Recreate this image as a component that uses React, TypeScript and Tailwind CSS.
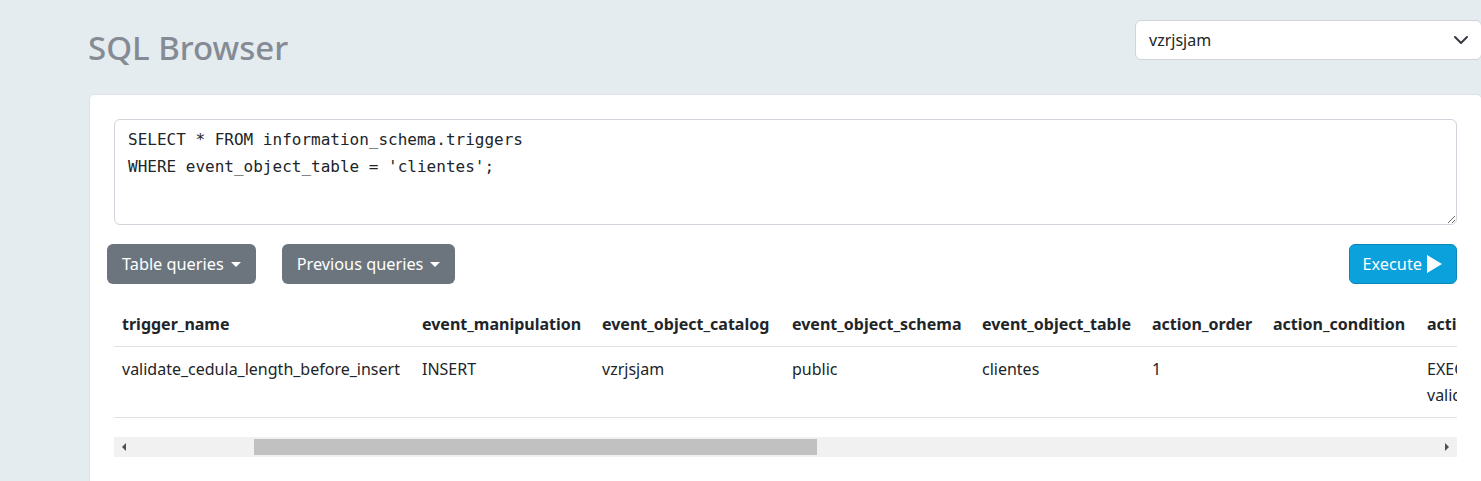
import { useState } from "react";

const columns = [
  { name: "trigger_name", width: "w-[300px]" },
  { name: "event_manipulation", width: "w-[180px]" },
  { name: "event_object_catalog", width: "w-[190px]" },
  { name: "event_object_schema", width: "w-[190px]" },
  { name: "event_object_table", width: "w-[170px]" },
  { name: "action_order", width: "w-[121px]" },
  { name: "action_condition", width: "w-[154px]" },
  { name: "action_statement", width: "w-[200px]" },
  { name: "action_orientation", width: "w-[170px]" },
  { name: "action_timing", width: "w-[140px]" },
  { name: "action_reference_old_table", width: "w-[240px]" },
  { name: "action_reference_new_table", width: "w-[240px]" },
  { name: "created", width: "w-[120px]" },
];

const rows = [
  [
    "validate_cedula_length_before_insert",
    "INSERT",
    "vzrjsjam",
    "public",
    "clientes",
    "1",
    "",
    "EXECUTE FUNCTION validate_cedula_length()",
    "ROW",
    "BEFORE",
    "",
    "",
    "",
  ],
];

function Caret() {
  return (
    <span className="ml-[7px] inline-block h-0 w-0 border-x-[5px] border-t-[5px] border-x-transparent border-t-white align-middle" />
  );
}

function ScrollBar() {
  return (
    <div className="mt-[19px] flex h-[20px] items-center bg-[#f1f1f1]">
      <div className="flex w-[20px] items-center justify-center">
        <span className="h-0 w-0 border-y-[4px] border-r-[4px] border-y-transparent border-r-[#505050]" />
      </div>
      <div className="w-[120px]" />
      <div className="h-[16px] w-[563px] bg-[#c1c1c1]" />
      <div className="flex-1" />
      <div className="flex w-[20px] items-center justify-center">
        <span className="h-0 w-0 border-y-[4px] border-l-[4px] border-y-transparent border-l-[#505050]" />
      </div>
    </div>
  );
}

export default function App() {
  const [query, setQuery] = useState(
    "SELECT * FROM information_schema.triggers\nWHERE event_object_table = 'clientes';",
  );

  return (
    <div className="min-h-screen w-full overflow-hidden bg-[#e5ecf0] font-['Noto_Sans',sans-serif] text-[#212529]">
      <div className="ml-[89px] w-[1393px]">
        <header className="flex h-[94px] items-start justify-between">
          <h1 className="mt-[28px] -ml-[1px] text-[33px] leading-[40px] font-medium text-[#858b94]">SQL Browser</h1>
          <div className="mt-[20px] flex h-[40px] w-[347px] items-center justify-between rounded-[6px] border border-[#ced4da] bg-white pr-[12px] pl-[13px] text-[16px]">
            <span>vzrjsjam</span>
            <svg width="16" height="16" viewBox="0 0 16 16" fill="none">
              <path d="M2 5l6 6 6-6" stroke="#343a40" strokeWidth="2" strokeLinecap="round" strokeLinejoin="round" />
            </svg>
          </div>
        </header>

        <section className="rounded-[5px] border border-[#dde2e7] bg-white px-[24px] pt-[24px] pb-[40px]">
          <textarea
            value={query}
            onChange={e => setQuery(e.target.value)}
            spellCheck={false}
            className="block h-[106px] w-full resize-y rounded-[6px] border border-[#ced4da] px-[13px] py-[6px] font-['DejaVu_Sans_Mono',monospace] text-[16px] leading-[27px] text-[#212529] outline-none"
          />

          <div className="mt-[19px] flex items-center justify-between">
            <div className="-ml-[7px] flex gap-[26px]">
              <button className="flex h-[40px] items-center rounded-[6px] bg-[#6c757d] px-[15px] text-[16.3px] text-white">
                Table queries
                <Caret />
              </button>
              <button className="flex h-[40px] items-center rounded-[6px] bg-[#6c757d] px-[15px] text-[16.3px] text-white">
                Previous queries
                <Caret />
              </button>
            </div>
            <button className="flex h-[40px] items-center gap-[4px] rounded-[6px] border border-[#0987b9] bg-[#0aa1dd] px-[13px] text-[16.3px] text-white">
              Execute
              <svg width="17" height="20" viewBox="0 0 17 20">
                <polygon points="1,1 16,10 1,19" fill="white" />
              </svg>
            </button>
          </div>

          <div className="mt-[18px] overflow-hidden">
            <table className="w-[2415px] table-fixed border-collapse text-left text-[16px] leading-[26px]">
              <colgroup>
                {columns.map(col => (
                  <col key={col.name} className={col.width} />
                ))}
              </colgroup>
              <thead>
                <tr className="border-b border-[#dee2e6]">
                  {columns.map(col => (
                    <th key={col.name} className="px-[8px] py-[9px] align-bottom font-bold whitespace-nowrap">
                      {col.name}
                    </th>
                  ))}
                </tr>
              </thead>
              <tbody>
                {rows.map((row, i) => (
                  <tr key={`row_${i}`} className="border-b border-[#dee2e6]">
                    {row.map((cell, j) => (
                      <td key={`cell_${i}_${j}`} className="px-[8px] py-[9px] align-top">
                        {cell}
                      </td>
                    ))}
                  </tr>
                ))}
              </tbody>
            </table>
          </div>

          <ScrollBar />
        </section>
      </div>
    </div>
  );
}
